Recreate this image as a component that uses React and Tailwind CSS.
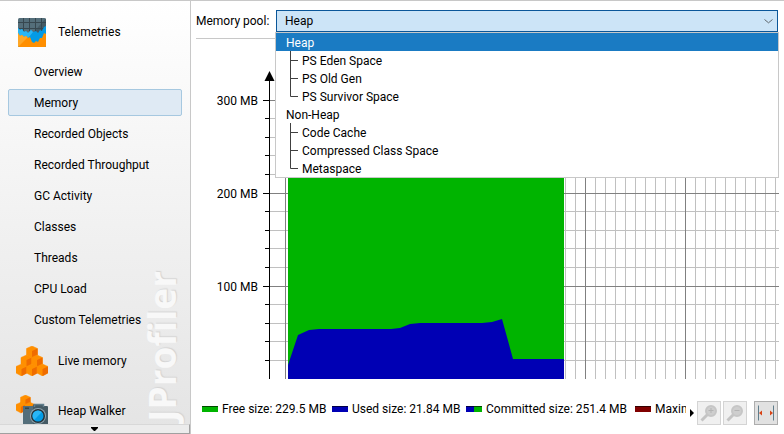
import React from "react";

const telemetryViews = [
  "Overview",
  "Memory",
  "Recorded Objects",
  "Recorded Throughput",
  "GC Activity",
  "Classes",
  "Threads",
  "CPU Load",
  "Custom Telemetries",
];

const pools = [
  { name: "Heap", children: ["PS Eden Space", "PS Old Gen", "PS Survivor Space"] },
  { name: "Non-Heap", children: ["Code Cache", "Compressed Class Space", "Metaspace"] },
];

const legend = [
  { label: "Free size: 229.5 MB", left: "bg-[#00b400]", right: "bg-[#00b400]", width: "w-[130px]" },
  { label: "Used size: 21.84 MB", left: "bg-[#0000b4]", right: "bg-[#0000b4]", width: "w-[134px]" },
  { label: "Committed size: 251.4 MB", left: "bg-[#0000b4]", right: "bg-[#00b400]", width: "w-[169px]" },
  { label: "Maximum size:", left: "bg-[#800000]", right: "bg-[#800000]", width: "w-[169px]" },
];

function TelemetryIcon() {
  return (
    <svg width="28" height="29" viewBox="0 0 28 29" aria-hidden="true">
      <clipPath id="tile">
        <rect width="28" height="29" rx="1.5" />
      </clipPath>
      <g clipPath="url(#tile)">
        <rect width="28" height="29" fill="#546e7a" />
        <path d="M28 0V16H14Z" fill="#455a64" />
        <path d="M5.500 0V14M11.500 0V14M17.500 0V14M23.500 0V14M0 4.500H28M0 10.500H28" stroke="#37474f" />
        <path d="M0 10L2 12L4 11L6 14L8 13L10 15L13 12L15 14L18 13L20 15L22 12L24 13L26 9L28 8V29H0Z" fill="#039be5" />
        <path d="M0 10L2 12L4 11L6 14L8 13L10 15L13 12L15 14L11 19L0 29Z" fill="#29b6f6" />
        <path d="M0 15L2 18L4 17L6 19L8 18L10 20L12 19L14 24L16 25L18 23L20 24L22 20L24 20L26 15L28 16V29H0Z" fill="#ff8f00" />
        <path d="M0 15L2 18L4 17L6 19L8 18L9.500 19.500L0 29Z" fill="#ffa726" />
      </g>
    </svg>
  );
}

function Cube({ x, y }) {
  return (
    <g transform={`translate(${x} ${y})`}>
      <path d="M0 2.500L5.500 0L11 2.500V9L5.500 12L0 9Z" fill="#ff8f00" stroke="#ff8f00" strokeWidth="0.5" />
      <path d="M5.500 5L11 2.500V9L5.500 12Z" fill="#ef6c00" />
    </g>
  );
}

function LiveMemoryIcon() {
  return (
    <svg width="32" height="30" viewBox="0 0 32 30" aria-hidden="true">
      <Cube x={10.5} y={0} />
      <Cube x={5} y={9} />
      <Cube x={15.5} y={9} />
      <Cube x={0} y={18} />
      <Cube x={10.5} y={18} />
      <Cube x={21} y={18} />
    </svg>
  );
}

function HeapWalkerIcon() {
  return (
    <svg width="32" height="32" viewBox="0 0 32 32" aria-hidden="true">
      <g transform="scale(0.9)">
        <Cube x={5} y={0} />
        <Cube x={0} y={8} />
        <Cube x={10} y={8} />
      </g>
      <path d="M7 12Q7 11 8 11H17V9.500H28V11H31Q32 11 32 12V32H7Z" fill="#455a64" />
      <path d="M7 12V32H17V11H8Q7 11 7 12Z" fill="#546e7a" />
      <path d="M18.500 12V9.500H27.500V12" fill="none" stroke="#607d8b" strokeWidth="1.500" />
      <rect x="9" y="12.500" width="4" height="1.500" fill="#37474f" />
      <circle cx="22" cy="21" r="8" fill="#90a4ae" />
      <circle cx="22" cy="21" r="7" fill="#263238" />
      <circle cx="22" cy="21" r="5.500" fill="#039be5" />
      <path d="M18.100 24.900A5.500 5.500 0 0 1 25.900 17.100Z" fill="#29b6f6" />
    </svg>
  );
}

function Sidebar() {
  return (
    <nav className="relative flex w-[191px] shrink-0 flex-col overflow-hidden border-r border-[#c8c8c8] bg-linear-to-b from-white to-[#e4e4e4]">
      <div
        aria-hidden="true"
        className="absolute right-2 bottom-3 rotate-180 font-['Open_Sans',sans-serif] text-[37px] leading-10 font-bold text-[#f8f8f8] [text-shadow:1px_1px_1px_#d4d4d4] [writing-mode:vertical-rl]"
      >
        JProfiler
      </div>
      <div className="relative flex min-h-0 flex-1 flex-col overflow-hidden">
        <button type="button" className="mt-4 flex h-[30px] shrink-0 items-center gap-3 pl-[18px]">
          <TelemetryIcon />
          Telemetries
        </button>
        <ul className="mt-[11px] flex shrink-0 flex-col gap-1 px-2">
          {telemetryViews.map((view) => (
            <li key={view}>
              <button
                type="button"
                className={
                  view === "Memory"
                    ? "block h-[27px] w-[174px] rounded-xs border border-[#a6c8e0] bg-[#dfeaf4] pl-[25px] text-left"
                    : "block h-[27px] w-[174px] border border-transparent pl-[25px] text-left"
                }
              >
                {view}
              </button>
            </li>
          ))}
        </ul>
        <button type="button" className="mt-[13px] flex h-[30px] shrink-0 items-center gap-[10px] pl-4">
          <LiveMemoryIcon />
          Live memory
        </button>
        <button type="button" className="mt-[19px] flex h-8 shrink-0 items-center gap-[10px] pl-4">
          <HeapWalkerIcon />
          Heap Walker
        </button>
      </div>
      <button
        type="button"
        aria-label="Scroll down"
        className="relative flex h-[10px] w-full shrink-0 items-center justify-center border-t border-r border-b border-t-[#d8d8d8] border-r-[#a0a0a0] border-b-[#a0a0a0] bg-[#ececec]"
      >
        <svg width="7" height="4" viewBox="0 0 7 4" aria-hidden="true">
          <path d="M0 0H7V1L4 4H3L0 1Z" />
        </svg>
      </button>
    </nav>
  );
}

function PoolList() {
  return (
    <ul
      role="listbox"
      aria-label="Memory pools"
      className="absolute -inset-x-px top-full z-10 border border-[#c8c8c8] bg-white leading-5"
    >
      {pools.map((pool) => (
        <React.Fragment key={pool.name}>
          <li
            role="option"
            aria-selected={pool.name === "Heap"}
            className={pool.name === "Heap" ? "h-[18px] bg-[#1a7bc3] pl-[10px] text-white" : "h-[18px] pl-[10px]"}
          >
            {pool.name}
          </li>
          {pool.children.map((child, i) => (
            <li key={child} role="option" aria-selected="false" className="flex h-[18px] gap-1 pl-[14px]">
              <svg width="8" height="18" viewBox="0 0 8 18" aria-hidden="true">
                <path
                  d={i === pool.children.length - 1 ? "M0.500 0V9.500H8" : "M0.500 0V18M0 9.500H8"}
                  fill="none"
                  stroke="#404040"
                />
              </svg>
              {child}
            </li>
          ))}
        </React.Fragment>
      ))}
    </ul>
  );
}

function PoolHeader() {
  return (
    <header className="mx-[5px] flex items-center border-b border-[#c8c8c8] pt-[9px] pr-px pb-[6px]">
      <label htmlFor="pool" className="w-20 shrink-0">
        Memory pool:
      </label>
      <div className="relative min-w-0 flex-1">
        <select
          id="pool"
          defaultValue="Heap"
          className="block h-[22px] w-full appearance-none border border-[#0a5699] bg-[#cce4f7] pl-2 outline-none"
        >
          {pools.map((pool) => (
            <option key={pool.name}>{pool.name}</option>
          ))}
        </select>
        <svg
          className="pointer-events-none absolute top-[9px] right-[5px]"
          width="9"
          height="5"
          viewBox="0 0 9 5"
          aria-hidden="true"
        >
          <path d="M0.500 0.500L4.500 3.800L8.500 0.500" fill="none" stroke="#60686e" />
        </svg>
        <PoolList />
      </div>
    </header>
  );
}

const minorRows = [79, 98, 116, 135, 172, 191, 209, 228, 265, 284, 302, 321];
const majorRows = [
  { y: 61, label: "300 MB" },
  { y: 154, label: "200 MB" },
  { y: 247, label: "100 MB" },
];
const columns = Array.from({ length: 200 }, (_, i) => ({ x: 89 + i * 10, major: i % 10 === 0 }));

function MemoryChart() {
  return (
    <div className="mx-[5px]">
      <svg className="block w-full" height="340" role="img" aria-label="Memory usage" shapeRendering="crispEdges">
        {columns
          .filter((c) => !c.major)
          .map((c) => (
            <rect key={c.x} x={c.x} y="43" width="1" height="297" fill="#c0c0c0" />
          ))}
        {minorRows.map((y) => (
          <g key={y}>
            <svg x="74" overflow="visible">
              <rect y={y} width="100%" height="1" fill="#c0c0c0" />
            </svg>
            <rect x="69" y={y} width="4" height="1" />
          </g>
        ))}
        {columns
          .filter((c) => c.major)
          .map((c) => (
            <rect key={c.x} x={c.x} y="43" width="1" height="297" fill="#808080" />
          ))}
        {majorRows.map((row) => (
          <g key={row.y}>
            <svg x="74" overflow="visible">
              <rect y={row.y} width="100%" height="1" fill="#808080" />
            </svg>
            <rect x="67" y={row.y} width="6" height="1" />
            <text x="62" y={row.y + 5} textAnchor="end">
              {row.label}
            </text>
          </g>
        ))}
        <rect x="73" y="40" width="1" height="300" />
        <path d="M73.500 32L78.500 42H68.500Z" shapeRendering="geometricPrecision" />
        <rect x="92" y="106" width="276" height="234" fill="#00b400" />
        <path
          d="M92 340V326L102 296L113 291L123 290H195L204 289L214 285L224 284H286L296 283L306 280L317 320H368V340Z"
          fill="#0000b4"
          shapeRendering="geometricPrecision"
        />
      </svg>
    </div>
  );
}

function Magnifier({ plus }) {
  return (
    <svg width="18" height="18" viewBox="0 0 18 18" aria-hidden="true">
      <path d="M1.500 16.500L7.500 10.500" stroke="#c4c4c4" strokeWidth="3" />
      <circle cx="11" cy="7" r="5" fill="#cecece" stroke="#c6c6c6" strokeWidth="2" />
      <path d={plus ? "M8.500 6.500H13.500M11 4V9" : "M8.500 6.500H13.500"} stroke="#b4b4b4" />
    </svg>
  );
}

function Footer() {
  return (
    <footer className="flex items-start pt-[22px] pr-[6px] pl-[11px]">
      <ul className="flex h-4 min-w-0 flex-1 overflow-hidden leading-4 whitespace-nowrap">
        {legend.map((item) => (
          <li key={item.label} className={`flex shrink-0 items-center gap-1 ${item.width}`}>
            <span className="flex h-[6px] w-4">
              <span className={`flex-1 border-t border-black/60 ${item.left}`} />
              <span className={`flex-1 border-t border-black/60 ${item.right}`} />
            </span>
            <span>{item.label}</span>
          </li>
        ))}
      </ul>
      <button type="button" aria-label="Scroll legend" className="flex h-6 w-[11px] shrink-0 items-center pl-1">
        <svg width="4" height="8" viewBox="0 0 4 8" aria-hidden="true">
          <path d="M0 0L4 4L0 8Z" />
        </svg>
      </button>
      <div className="flex shrink-0 gap-[2px]">
        <button
          type="button"
          disabled
          aria-label="Zoom in"
          className="flex size-6 items-center justify-center border border-[#d4d4d4] bg-[#f0f0f0]"
        >
          <Magnifier plus />
        </button>
        <button
          type="button"
          disabled
          aria-label="Zoom out"
          className="flex size-6 items-center justify-center border border-[#d4d4d4] bg-[#f0f0f0]"
        >
          <Magnifier />
        </button>
        <button
          type="button"
          aria-label="Fit to window"
          className="ml-[5px] flex size-6 items-center justify-center border border-[#adadad] bg-[#e1e1e1]"
        >
          <svg width="18" height="18" viewBox="0 0 18 18" aria-hidden="true">
            <path d="M1.500 1.500V16.500M16.500 1.500V16.500" stroke="#607d8b" />
            <path d="M2 9L5 6.500V11.500ZM16 9L13 6.500V11.500Z" fill="#d84315" />
          </svg>
        </button>
      </div>
    </footer>
  );
}

export default function App() {
  return (
    <div className="flex h-screen overflow-hidden border-t border-[#c8c8c8] bg-white font-['Roboto','Noto_Sans',sans-serif] text-xs text-black">
      <Sidebar />
      <main className="flex min-w-0 flex-1 flex-col">
        <PoolHeader />
        <MemoryChart />
        <Footer />
      </main>
    </div>
  );
}
